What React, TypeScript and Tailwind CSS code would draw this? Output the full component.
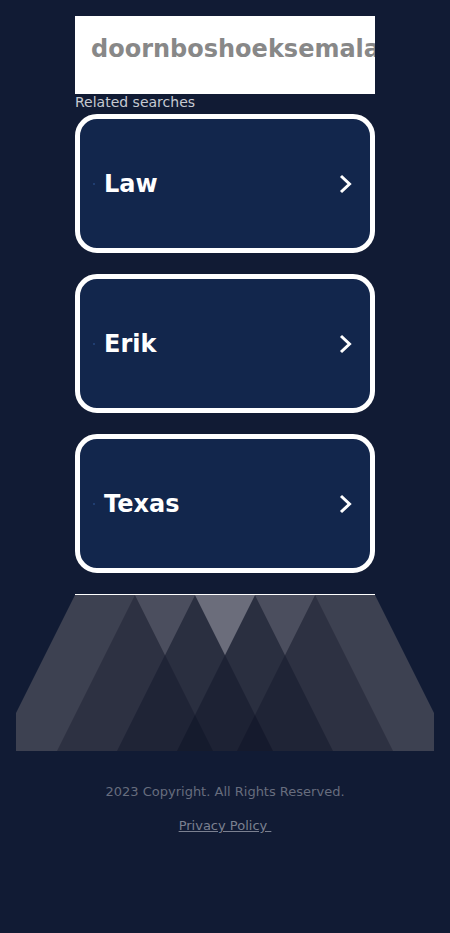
const searches = ["Law", "Erik", "Texas"];

const Chevron = () => (
  <svg width="16" height="22" viewBox="0 0 16 22" fill="none">
    <path d="M3 3 L11.5 11 L3 19" stroke="white" strokeWidth="3" />
  </svg>
);

const Mountains = () => (
  <svg width="418" height="156" viewBox="0 0 418 156" className="block">
    <polygon points="59,0 359,0 418,118 418,156 0,156 0,118" fill="#3d4151" />
    <polygon points="119,0 197,156 41,156" fill="#000519" fillOpacity="0.25" />
    <polygon points="179,0 257,156 101,156" fill="#000519" fillOpacity="0.3" />
    <polygon points="239,0 317,156 161,156" fill="#000519" fillOpacity="0.3" />
    <polygon points="299,0 377,156 221,156" fill="#000519" fillOpacity="0.25" />
    <polygon points="119,0 179,0 149,60" fill="#4b4e5e" />
    <polygon points="179,0 239,0 209,60" fill="#6b6d7b" />
    <polygon points="239,0 299,0 269,60" fill="#4b4e5e" />
  </svg>
);

export default function App() {
  return (
    <div className="min-h-screen bg-[#111b34] pt-4 font-['DejaVu_Sans',sans-serif]">
      <div className="mx-auto w-[300px]">
        <div className="h-[78px] overflow-hidden bg-white px-4 pt-[19px]">
          <span className="whitespace-nowrap text-2xl font-bold leading-[28px] text-[#888888]">
            doornboshoeksemalaan.nl
          </span>
        </div>
        <p className="mb-1 text-sm leading-4 text-[#c6c9d1]">Related searches</p>
        <div className="flex flex-col gap-[21px]">
          {searches.map((s) => (
            <a
              key={s}
              href="#"
              className="flex h-[139px] items-center rounded-[22px] border-[5px] border-white bg-[#12264c] pl-[13px] pr-[16px]"
            >
              <span className="mr-[9px] h-[2px] w-[2px] bg-[#1f3d70]" />
              <span className="flex-1 text-2xl font-bold text-white">{s}</span>
              <Chevron />
            </a>
          ))}
        </div>
        <div className="mt-[21px] h-px bg-white" />
      </div>
      <div className="px-4">
        <Mountains />
      </div>
      <footer className="mt-[33px] flex flex-col items-center text-[13px]">
        <p className="leading-[15px] text-[#676d7e]">2023 Copyright. All Rights Reserved.</p>
        <a href="#" className="mt-[19px] whitespace-pre leading-[15px] text-[#7b8090] underline">
          {"Privacy Policy "}
        </a>
      </footer>
    </div>
  );
}
